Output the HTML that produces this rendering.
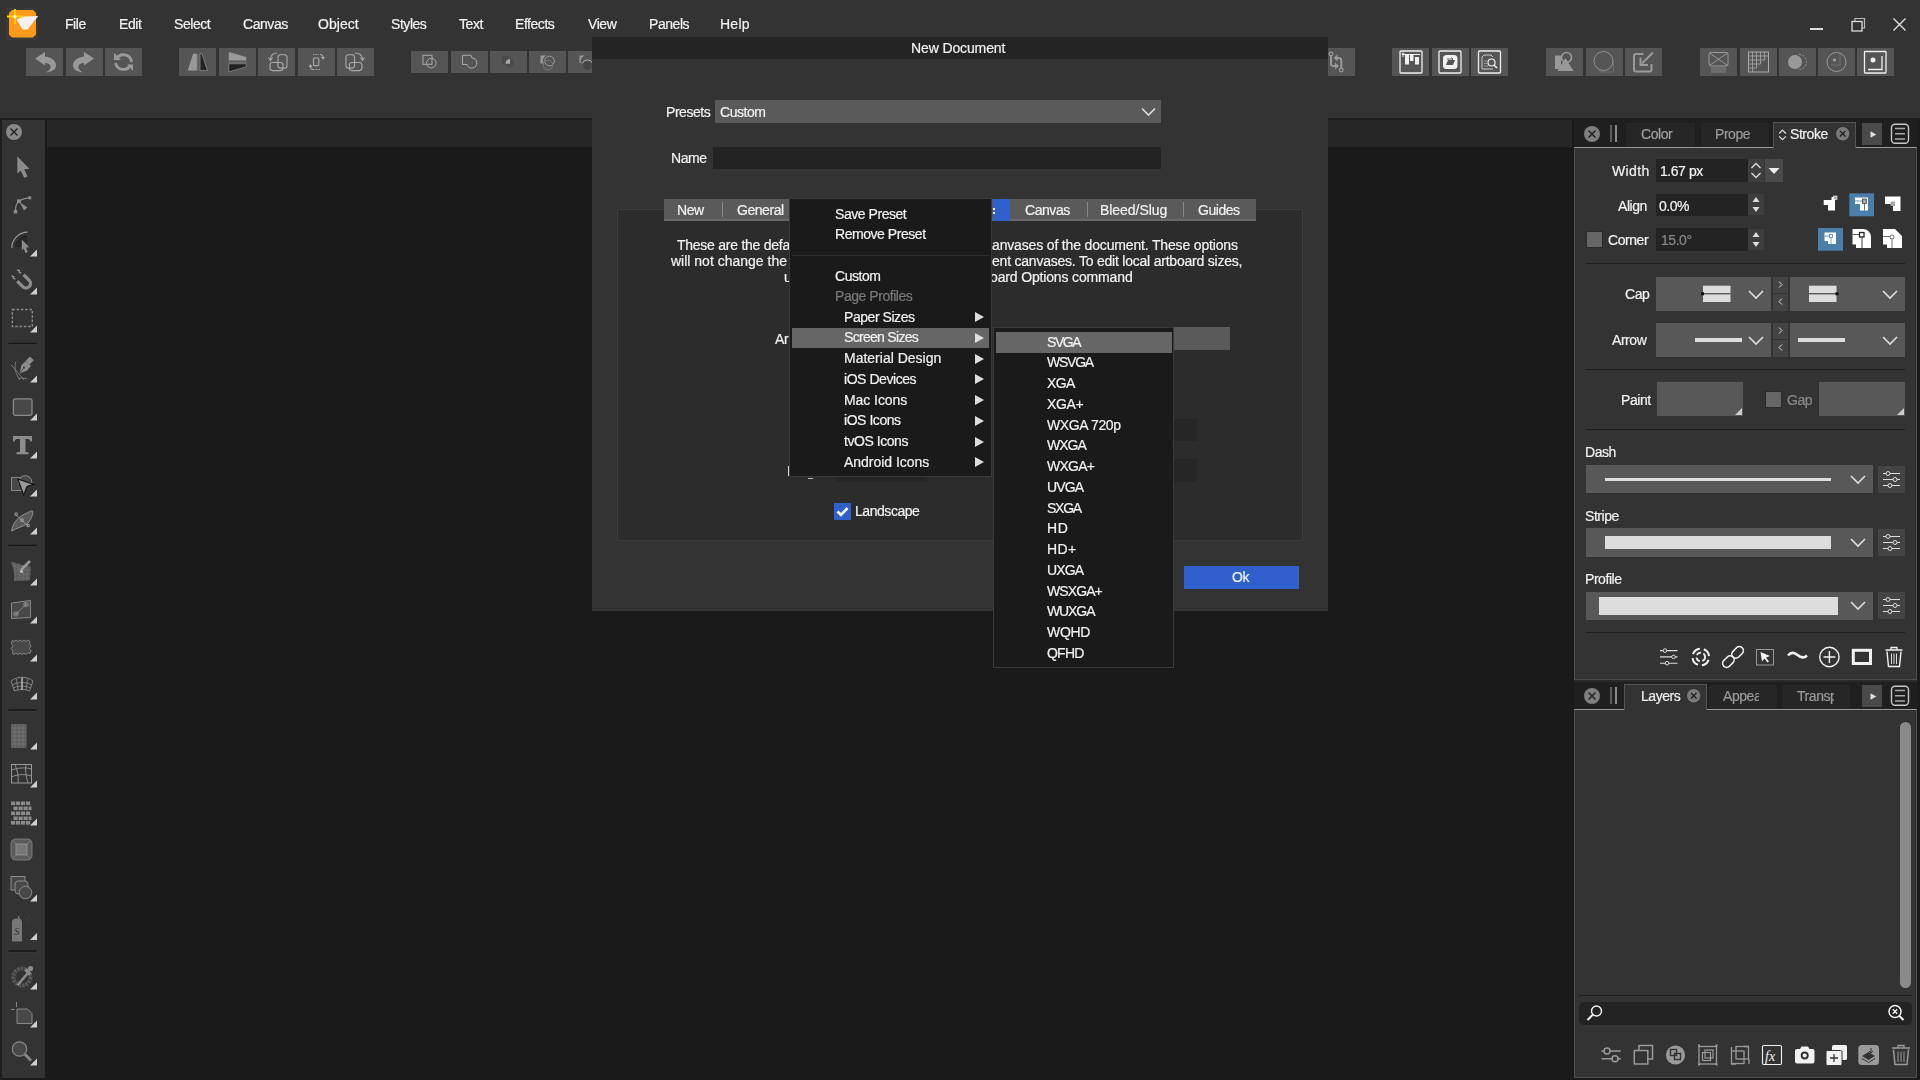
<!DOCTYPE html>
<html><head><meta charset="utf-8">
<style>
*{margin:0;padding:0;box-sizing:border-box}
html,body{width:1920px;height:1080px;overflow:hidden;background:#1a1a1a;font-family:"Liberation Sans",sans-serif;color:#f2f2f2}
.a{position:absolute}
.t{position:absolute;font-size:14px;line-height:13px;letter-spacing:-0.45px;white-space:nowrap;-webkit-text-stroke:0.2px currentColor;will-change:transform}
.btn{position:absolute;top:48px;width:37px;height:28px;background:#555}
.sbtn{position:absolute;top:51px;width:37px;height:22px;background:#555}
svg{position:absolute;overflow:visible}
</style></head><body>
<!-- top app bar -->
<div class="a" style="left:0;top:0;width:1920px;height:118px;background:#333"></div>
<div class="a" style="left:0;top:118px;width:1920px;height:2px;background:#1c1c1c"></div>
<!-- doc tab strip -->
<div class="a" style="left:47px;top:120px;width:1525px;height:27px;background:#262626"></div>
<!-- left toolbar -->
<div class="a" style="left:0;top:120px;width:2px;height:960px;background:#1e1e1e"></div>
<div class="a" style="left:2px;top:120px;width:43px;height:958px;background:#333"></div>


<!-- logo -->
<div class="a" style="left:6px;top:8px;width:32px;height:32px;background:#3a3a3a"></div>
<svg style="left:0;top:0" width="44" height="44" viewBox="0 0 44 44">
<path d="M12 10 H33 L36 13 V34.5 L33 37.5 H12 L9 34.5 V13 Z" fill="#fb9a1c"/>
<path d="M16.5 19.5 L24 16.5 L38.2 16 L27.5 29.5 L22.5 29.5 Z" fill="#f4f2f0"/>
<path d="M15 9 V24 M7 16.5 H23" stroke="#ffd400" stroke-width="1.8"/>
<circle cx="15" cy="16.5" r="1.5" fill="#fff"/>
</svg>
<!-- menu -->
<span class="t" style="left:65px;top:18px">File</span>
<span class="t" style="left:119px;top:18px">Edit</span>
<span class="t" style="left:174px;top:18px">Select</span>
<span class="t" style="left:243px;top:18px">Canvas</span>
<span class="t" style="left:318px;top:18px;letter-spacing:0.05px">Object</span>
<span class="t" style="left:391px;top:18px">Styles</span>
<span class="t" style="left:459px;top:18px">Text</span>
<span class="t" style="left:515px;top:18px">Effects</span>
<span class="t" style="left:588px;top:18px">View</span>
<span class="t" style="left:649px;top:18px">Panels</span>
<span class="t" style="left:720px;top:18px;letter-spacing:0.25px">Help</span>
<!-- window controls -->
<div class="a" style="left:1810px;top:28px;width:13px;height:2px;background:#ddd"></div>
<svg style="left:1850px;top:17px" width="16" height="16" viewBox="0 0 16 16"><path d="M5 4 V1.5 H14.5 V11 H12" fill="none" stroke="#bbb" stroke-width="1.2"/><rect x="2" y="4.5" width="10" height="9.5" fill="none" stroke="#ddd" stroke-width="1.3"/></svg>
<svg style="left:1892px;top:17px" width="15" height="15" viewBox="0 0 15 15"><path d="M1.5 1.5 L13.5 13.5 M13.5 1.5 L1.5 13.5" stroke="#e0e0e0" stroke-width="1.4"/></svg>

<!-- toolbar -->
<div class="a" style="left:26px;top:48px;width:37px;height:28px;background:#555"><svg width="37" height="28" viewBox="0 0 37 28"><path d="M9 10.5 L19 4 L19 8.5 C26 9.5 30 13 30 17.5 C30 21 27 23.5 20 24.5 C24 22 25 20 24.5 18 C24 16 22 15 19 15 L19 17.5 Z" fill="#999"/></svg></div>
<div class="a" style="left:66px;top:48px;width:37px;height:28px;background:#555"><svg width="37" height="28" viewBox="0 0 37 28"><path d="M28 10.5 L18 4 L18 8.5 C11 9.5 7 13 7 17.5 C7 21 10 23.5 17 24.5 C13 22 12 20 12.5 18 C13 16 15 15 18 15 L18 17.5 Z" fill="#999"/></svg></div>
<div class="a" style="left:105px;top:48px;width:37px;height:28px;background:#555"><svg width="37" height="28" viewBox="0 0 37 28"><path d="M11.5 11 A8 8 0 0 1 26.5 14" fill="none" stroke="#999" stroke-width="2.8"/><path d="M25.5 17 A8 8 0 0 1 10.5 15" fill="none" stroke="#999" stroke-width="2.8"/><path d="M9 4.8 L9 11.9 L15.9 11.9 Z M28 16.6 L28 23 L22 16.6 Z" fill="#999"/></svg></div>
<div class="a" style="left:179px;top:48px;width:37px;height:28px;background:#555"><svg width="37" height="28" viewBox="0 0 37 28"><path d="M14.1 5.75 L17.9 5.75 L17.9 22.6 L8.75 22.6 Z" fill="#999"/><path d="M18.8 5.5 V23" stroke="#777" stroke-width="1"/><path d="M21 5.75 L22.9 5.75 L28.5 22.6 L21 22.6 Z" fill="#222" stroke="#8a8a8a" stroke-width="0.8"/></svg></div>
<div class="a" style="left:219px;top:48px;width:37px;height:28px;background:#555"><svg width="37" height="28" viewBox="0 0 37 28"><path d="M9.75 3.9 L27.25 8.9 L27.25 12.6 L9.75 12.6 Z" fill="#999"/><path d="M9.5 14.3 H27.5" stroke="#777" stroke-width="1"/><path d="M9.75 15.75 L27.25 15.75 L27.25 18.9 L9.75 23.9 Z" fill="#222" stroke="#8a8a8a" stroke-width="0.8"/></svg></div>
<div class="a" style="left:258px;top:48px;width:37px;height:28px;background:#555"><svg width="37" height="28" viewBox="0 0 37 28"><rect x="20" y="6.75" width="9" height="13.4" rx="2.5" fill="none" stroke="#aaa" stroke-width="1.1"/><rect x="12" y="14.5" width="13" height="8.1" rx="2.5" fill="none" stroke="#aaa" stroke-width="1.1"/><path d="M19 5 C15 5 13 7 12.5 11" fill="none" stroke="#aaa" stroke-width="1.1"/><path d="M10.5 9.5 L12.5 12.5 L14.5 9.5" fill="none" stroke="#aaa" stroke-width="1.1"/></svg></div>
<div class="a" style="left:298px;top:48px;width:37px;height:28px;background:#555"><svg width="37" height="28" viewBox="0 0 37 28"><rect x="15.5" y="10" width="5.3" height="7.6" rx="0.8" fill="none" stroke="#aaa" stroke-width="1.1"/><path d="M15 6.5 H21 M15 21.5 H22" stroke="#aaa" stroke-width="1.1" stroke-dasharray="1.5 1.2"/><path d="M22 6.5 C24 6.5 25 8 25 10" fill="none" stroke="#aaa" stroke-width="1.1"/><path d="M23 9 L25 12 L27 9 Z" fill="#aaa"/><path d="M15 21.5 C13 21.5 12.5 20 12.5 18" fill="none" stroke="#aaa" stroke-width="1.1"/><path d="M10.5 19 L12.5 16 L14.5 19 Z" fill="#aaa"/></svg></div>
<div class="a" style="left:337px;top:48px;width:37px;height:28px;background:#555"><svg width="37" height="28" viewBox="0 0 37 28"><rect x="9" y="6.75" width="8.5" height="13.4" rx="2.5" fill="none" stroke="#aaa" stroke-width="1.1"/><rect x="12.4" y="14.5" width="12.5" height="8.1" rx="2.5" fill="none" stroke="#aaa" stroke-width="1.1"/><path d="M18 5 C22 5 25 7 25.5 11" fill="none" stroke="#aaa" stroke-width="1.1"/><path d="M23.5 9.5 L25.5 12.5 L27.5 9.5" fill="none" stroke="#aaa" stroke-width="1.1"/></svg></div>
<div class="a" style="left:411px;top:51px;width:37px;height:22px;background:#555"><svg width="37" height="22" viewBox="0 0 37 22"><rect x="12" y="4.3" width="9" height="9" fill="none" stroke="#aaa" stroke-width="1"/><circle cx="20.3" cy="12.1" r="4.8" fill="none" stroke="#aaa" stroke-width="1"/></svg></div>
<div class="a" style="left:451px;top:51px;width:37px;height:22px;background:#555"><svg width="37" height="22" viewBox="0 0 37 22"><path d="M11.5 4.3 H20 L21 7 A5 5 0 1 1 16 13.5 H11.5 Z" fill="none" stroke="#aaa" stroke-width="1"/></svg></div>
<div class="a" style="left:490px;top:51px;width:37px;height:22px;background:#555"><svg width="37" height="22" viewBox="0 0 37 22"><rect x="12" y="4.8" width="8" height="8" fill="#4a4a4a"/><circle cx="19.5" cy="12" r="4.5" fill="#4a4a4a"/><path d="M15.5 12.8 A4.5 4.5 0 0 1 20 8 V12.8 Z" fill="#aaa"/></svg></div>
<div class="a" style="left:529px;top:51px;width:37px;height:22px;background:#555"><svg width="37" height="22" viewBox="0 0 37 22"><path d="M11.5 4.5 H18 A5 5 0 0 0 15 12.5 L11.5 12.5 Z" fill="#999"/><circle cx="20.5" cy="10" r="4.8" fill="none" stroke="#999" stroke-width="1"/><circle cx="19" cy="14" r="4.8" fill="none" stroke="#777" stroke-width="1"/></svg></div>
<div class="a" style="left:568px;top:51px;width:37px;height:22px;background:#555"><svg width="37" height="22" viewBox="0 0 37 22"><path d="M11.5 4.5 H17 A6 6 0 0 0 13 12 L11.5 12 Z" fill="#999"/><path d="M14 12.5 A6 6 0 0 1 25 12.5" fill="none" stroke="#aaa" stroke-width="1"/><circle cx="19.5" cy="14.5" r="4.2" fill="#444"/></svg></div>
<div class="a" style="left:1318px;top:48px;width:37px;height:28px;background:#555"><svg width="37" height="28" viewBox="0 0 37 28"><circle cx="13" cy="6" r="1.8" fill="none" stroke="#999" stroke-width="1.3"/><path d="M13 8 V16 C13 18 14 18 16 18 H18" fill="none" stroke="#999" stroke-width="2"/><path d="M17 14.5 L21 18 L17 21.5 Z" fill="#999"/><circle cx="23.3" cy="22" r="1.8" fill="none" stroke="#999" stroke-width="1.3"/><path d="M23.3 20 V12 C23.3 10 22 10 20 10 H19" fill="none" stroke="#999" stroke-width="2"/><path d="M19.5 6.5 L15.5 10 L19.5 13.5 Z" fill="#999"/></svg></div>
<div class="a" style="left:1392px;top:48px;width:37px;height:28px;background:#555"><svg width="37" height="28" viewBox="0 0 37 28"><rect x="8" y="3" width="22" height="22" rx="1" fill="none" stroke="#f0f0f0" stroke-width="1.3"/><path d="M10 6.5 H28" stroke="#f0f0f0" stroke-width="1"/><rect x="13" y="6.5" width="4" height="10" fill="#f0f0f0"/><rect x="18" y="6.5" width="3.5" height="6.5" fill="#f0f0f0"/><rect x="23" y="9" width="4" height="7.5" fill="#f0f0f0"/><path d="M11 4.5 V9 M9.5 6 H12.5" stroke="#f0f0f0" stroke-width="0.9"/></svg></div>
<div class="a" style="left:1432px;top:48px;width:37px;height:28px;background:#555"><svg width="37" height="28" viewBox="0 0 37 28"><rect x="7" y="3" width="22" height="22" rx="1" fill="none" stroke="#f0f0f0" stroke-width="1.3"/><rect x="11" y="7" width="14.5" height="14" rx="3.5" fill="#f0f0f0"/><path d="M14 17 L16 12 H23 L21 17 Z" fill="#555"/><path d="M15 11 H21 M19.5 9.5 L21 11 L19.5 12.5" stroke="#555" stroke-width="0.9" fill="none"/></svg></div>
<div class="a" style="left:1471px;top:48px;width:37px;height:28px;background:#555"><svg width="37" height="28" viewBox="0 0 37 28"><rect x="7.5" y="3" width="22" height="22" rx="1" fill="none" stroke="#f0f0f0" stroke-width="1.3"/><path d="M13 7 H20 L22 9 M13 7 L11 9 V21 H22" fill="none" stroke="#ccc" stroke-width="1"/><circle cx="20.5" cy="14.5" r="3.5" fill="none" stroke="#f0f0f0" stroke-width="1.2"/><path d="M23 17 L26 20" stroke="#f0f0f0" stroke-width="1.6"/><path d="M13 13 H16 M13 15.5 H16 M13 18 H17" stroke="#aaa" stroke-width="0.8"/></svg></div>
<div class="a" style="left:1546px;top:48px;width:37px;height:28px;background:#555"><svg width="37" height="28" viewBox="0 0 37 28"><rect x="9" y="7.5" width="6" height="13.5" fill="#999"/><circle cx="20.5" cy="9.5" r="5" fill="none" stroke="#999" stroke-width="1.6"/><path d="M19.5 10 L27.5 23 H11.5 Z" fill="#999"/></svg></div>
<div class="a" style="left:1586px;top:48px;width:37px;height:28px;background:#555"><svg width="37" height="28" viewBox="0 0 37 28"><circle cx="17.5" cy="13" r="9.5" fill="none" stroke="#999" stroke-width="0.9"/><path d="M24 20 A9.5 9.5 0 0 1 13 22.5 L14 24 H27.5 V14 Z" fill="none" stroke="#888" stroke-width="0.8" stroke-dasharray="1 1"/></svg></div>
<div class="a" style="left:1625px;top:48px;width:37px;height:28px;background:#555"><svg width="37" height="28" viewBox="0 0 37 28"><path d="M18.5 6 H11 A2 2 0 0 0 9 8 V21.5 A2 2 0 0 0 11 23.5 H24.5 A2 2 0 0 0 26.5 21.5 V16" fill="none" stroke="#999" stroke-width="2"/><path d="M28 4.5 L17 15.5" stroke="#999" stroke-width="2"/><path d="M15.5 9.5 V17 H23" fill="none" stroke="#999" stroke-width="2"/></svg></div>
<div class="a" style="left:1700px;top:48px;width:37px;height:28px;background:#555"><svg width="37" height="28" viewBox="0 0 37 28"><rect x="9" y="4.5" width="19" height="13.5" rx="2" fill="none" stroke="#999" stroke-width="1"/><path d="M9.5 5 L27.5 17.5 M27.5 5 L9.5 17.5" stroke="#999" stroke-width="1"/><path d="M11 20 H26 M11 22 H26 M11 24 H26" stroke="#999" stroke-width="0.7"/></svg></div>
<div class="a" style="left:1740px;top:48px;width:37px;height:28px;background:#555"><svg width="37" height="28" viewBox="0 0 37 28"><rect x="8.5" y="4" width="20" height="20" fill="none" stroke="#aaa" stroke-width="1"/><path d="M8.5 8 H28.5 M8.5 12 H24.5 M8.5 16 H20.5 M8.5 20 H16.5 M12.5 4 V24 M16.5 4 V20 M20.5 4 V16 M24.5 4 V12" stroke="#aaa" stroke-width="0.8"/><path d="M28.5 8 L12.5 24" stroke="#888" stroke-width="0.6" stroke-dasharray="1 1.5"/></svg></div>
<div class="a" style="left:1779px;top:48px;width:37px;height:28px;background:#555"><svg width="37" height="28" viewBox="0 0 37 28"><circle cx="16" cy="14" r="7" fill="#999"/><path d="M20 6.5 A7.5 7.5 0 0 1 20 21.5" fill="none" stroke="#999" stroke-width="1" stroke-dasharray="2 1.5"/></svg></div>
<div class="a" style="left:1818px;top:48px;width:37px;height:28px;background:#555"><svg width="37" height="28" viewBox="0 0 37 28"><circle cx="18.5" cy="14" r="9.5" fill="none" stroke="#999" stroke-width="1"/><circle cx="16.5" cy="12" r="1.7" fill="#999"/><path d="M22 6.5 V17 H13" fill="none" stroke="#999" stroke-width="0.8" stroke-dasharray="1 1"/></svg></div>
<div class="a" style="left:1857px;top:48px;width:37px;height:28px;background:#555"><svg width="37" height="28" viewBox="0 0 37 28"><rect x="7.5" y="3.5" width="21.5" height="21.5" rx="0.8" fill="none" stroke="#f0f0f0" stroke-width="1.3"/><circle cx="16" cy="12" r="2.5" fill="#f0f0f0"/><path d="M25 8 V21.5 H11" fill="none" stroke="#f0f0f0" stroke-width="1.3"/></svg></div>

<!-- left toolbar icons -->
<svg style="left:0;top:0" width="46" height="1080" viewBox="0 0 46 1080"><circle cx="14" cy="132" r="8" fill="#888"/><path d="M10.5 128.5 L17.5 135.5 M17.5 128.5 L10.5 135.5" stroke="#1e1e1e" stroke-width="1.3"/><rect x="8.5" y="342.75" width="28" height="1.6" fill="#151515"/><rect x="8.5" y="344.35" width="28" height="0.8" fill="#3c3c3c"/><rect x="8.5" y="544.75" width="28" height="1.6" fill="#151515"/><rect x="8.5" y="546.35" width="28" height="0.8" fill="#3c3c3c"/><rect x="8.5" y="709.25" width="28" height="1.6" fill="#151515"/><rect x="8.5" y="710.85" width="28" height="0.8" fill="#3c3c3c"/><rect x="8.5" y="950.25" width="28" height="1.6" fill="#151515"/><rect x="8.5" y="951.85" width="28" height="0.8" fill="#3c3c3c"/><path d="M30 256.5 L37 249.5 L37 256.5 Z" fill="#cfcfcf"/><path d="M30 294.5 L37 287.5 L37 294.5 Z" fill="#cfcfcf"/><path d="M30 332.5 L37 325.5 L37 332.5 Z" fill="#cfcfcf"/><path d="M30 382.5 L37 375.5 L37 382.5 Z" fill="#cfcfcf"/><path d="M30 420.5 L37 413.5 L37 420.5 Z" fill="#cfcfcf"/><path d="M30 458.5 L37 451.5 L37 458.5 Z" fill="#cfcfcf"/><path d="M30 496.5 L37 489.5 L37 496.5 Z" fill="#cfcfcf"/><path d="M30 534.5 L37 527.5 L37 534.5 Z" fill="#cfcfcf"/><path d="M30 585.5 L37 578.5 L37 585.5 Z" fill="#cfcfcf"/><path d="M30 623.5 L37 616.5 L37 623.5 Z" fill="#cfcfcf"/><path d="M30 661.5 L37 654.5 L37 661.5 Z" fill="#cfcfcf"/><path d="M30 699.5 L37 692.5 L37 699.5 Z" fill="#cfcfcf"/><path d="M30 749.5 L37 742.5 L37 749.5 Z" fill="#cfcfcf"/><path d="M30 787.5 L37 780.5 L37 787.5 Z" fill="#cfcfcf"/><path d="M30 825.5 L37 818.5 L37 825.5 Z" fill="#cfcfcf"/><path d="M30 901.5 L37 894.5 L37 901.5 Z" fill="#cfcfcf"/><path d="M30 940 L37 933 L37 940 Z" fill="#cfcfcf"/><path d="M30 989.5 L37 982.5 L37 989.5 Z" fill="#cfcfcf"/><path d="M30 1027.5 L37 1020.5 L37 1027.5 Z" fill="#cfcfcf"/><path d="M30 1065.5 L37 1058.5 L37 1065.5 Z" fill="#cfcfcf"/><path d="M17.3 156.3 L29.5 169 L24.2 169.3 L27.5 176.5 L24.2 178 L20.8 170.8 L17.3 173.6 Z" fill="#8c8c8c"/><path d="M15.4 211 C15.5 206 17 202 20 200.5 C23 198.5 26 197.8 29.5 197.8" fill="none" stroke="#8c8c8c" stroke-width="1.2"/><rect x="13.7" y="210" width="3.5" height="3.5" fill="#8c8c8c"/><rect x="28.3" y="196.3" width="3" height="3" fill="#8c8c8c"/><rect x="17" y="199.4" width="3.8" height="3.6" fill="#8c8c8c"/><path d="M19.5 202 L27.5 207.5 L24 210.5 Z" fill="#8c8c8c"/><path d="M11.8 248 A16 16 0 0 1 27.5 232.2" fill="none" stroke="#999" stroke-width="1.2"/><path d="M15 247 A13 13 0 0 1 27 235 V247 Z" fill="#262626"/><path d="M21.8 239.6 L29.3 247.3 L26 247.6 L27.8 252 L25.5 253 L23.7 248.6 L21.8 250.5 Z" fill="#8c8c8c"/><path d="M17.2 281.1 L22.8 286.7 A4.5 4.5 0 0 0 29.2 280.3 L23.6 274.7" fill="none" stroke="#8c8c8c" stroke-width="3.3"/><path d="M11.5 275.8 L13.8 276.6 L13.2 278 L15.5 279.3 M17.2 269.8 L19.5 270.6 L18.9 272 L21.2 273.3" fill="none" stroke="#999" stroke-width="1.3"/><rect x="12.3" y="309.5" width="20" height="17" fill="none" stroke="#8c8c8c" stroke-width="1.4" stroke-dasharray="2.5 1.8"/><path d="M11 365 C15 369 20 375 24 380 M16 361.5 C14 367 15 373 20 380 M18 378 L27 378.5" fill="none" stroke="#888" stroke-width="0.8"/><path d="M19.5 373.5 L21.5 365 L26 361 L31 366 L27 370.5 Z" fill="#8c8c8c"/><rect x="27" y="357.5" width="5.5" height="6" transform="rotate(45 29.75 360.5)" fill="#8c8c8c"/><circle cx="24" cy="367.5" r="0.9" fill="#333"/><path d="M19.8 373 L24 367.5" stroke="#333" stroke-width="0.6"/><rect x="13.4" y="398.8" width="18.6" height="16.6" rx="1.8" fill="#484848" stroke="#8a8a8a" stroke-width="1.3"/><path d="M13 436 H32 V441.5 L30.5 441.5 C30 439.5 29 439 27 439 H25.5 V451.5 C25.5 452 26.5 452.2 28.5 452.2 V454.2 H16.5 V452.2 C18.5 452.2 20 452 20 451.5 V439 H18 C16 439 15 439.5 14.5 441.5 L13 441.5 Z" fill="#8c8c8c"/><rect x="11.5" y="477.5" width="10.5" height="13" fill="#484848" stroke="#888" stroke-width="1"/><path d="M19 482 A6.4 6.4 0 0 1 31.8 482 V484 H19 Z" fill="#484848" stroke="#888" stroke-width="1"/><path d="M17.8 478.9 L33.8 484.4 L27 486.5 L23.7 494.9 Z" fill="#999" stroke="#111" stroke-width="1.1"/><path d="M11.5 531 C13 522 19 516 27 513 C30 511.5 31.5 510.5 32.5 511 C33.5 513 32 518 28 523 C23 527 16 528 11.5 531 Z" fill="#5a5a5a" stroke="#999" stroke-width="0.9"/><path d="M16 515 L28 526" stroke="#999" stroke-width="0.8"/><rect x="15" y="513" width="2.2" height="2.2" fill="none" stroke="#aaa" stroke-width="0.8"/><rect x="21" y="519" width="2.2" height="2.2" fill="none" stroke="#aaa" stroke-width="0.8"/><rect x="27" y="524.5" width="2.2" height="2.2" fill="none" stroke="#aaa" stroke-width="0.8"/><path d="M11 562 C16 563 20 564 25 566 L31 567 L30 580 C25 581 20 580.5 14 581 C15 575 13 568 11 562 Z" fill="#5a5a5a"/><path d="M11 562 L30 580 M13 566 H30 M14 570 H30 M14.5 574 H30 M14.5 578 H30 M15 562 V581 M19 563 V581 M23 565 V581 M27 566 V581" stroke="#777" stroke-width="0.6"/><path d="M21 570 L30 561" stroke="#999" stroke-width="2.6"/><circle cx="21.5" cy="571.5" r="1.6" fill="#bbb"/><path d="M11.5 603 L30.5 600.5 V617.5 L11.5 618.5 Z" fill="#484848" stroke="#8a8a8a" stroke-width="1"/><circle cx="16" cy="614" r="2.8" fill="#777"/><circle cx="26" cy="604.5" r="2.8" fill="#777"/><path d="M16 614 L26 604.5" stroke="#999" stroke-width="0.7"/><path d="M12 640.5 L14 641.5 L16 640 L18 641.5 L20 640 L22 641.5 L24 640 L26 641.5 L28 640 L30 641.5 L29.5 644 L31 646 L29.5 648.5 L31 651 L30 653.5 L28 652.5 L26 654.5 L24 653 L22 654.5 L20 653 L18 654.5 L16 653 L14 654.5 L12.5 653.5 L13 651 L11 648.5 L13 646 L11.5 644 Z" fill="#484848" stroke="#8a8a8a" stroke-width="0.9"/><path d="M11 681 C17 676 27 676 33 681 L29.5 691 C25 689 19 689 14.5 691 Z" fill="none" stroke="#999" stroke-width="0.8"/><path d="M12.5 685 C18 681.5 26 681.5 31.5 685 M13.5 688 C18 685.5 26 685.5 30.5 688 M22 677.5 V689.5 M16.5 679 L18 690 M27.5 679 L26 690" fill="none" stroke="#999" stroke-width="0.7"/><path d="M22 677.5 V690" stroke="#bbb" stroke-width="1.3"/><rect x="11" y="724" width="15.5" height="24" fill="#5e5e5e"/><path d="M11 728 H26.5 M11 732 H26.5 M11 736 H26.5 M11 740 H26.5 M11 744 H26.5 M15 724 V748 M19 724 V748 M23 724 V748" stroke="#7a7a7a" stroke-width="0.7"/><rect x="11.5" y="764.5" width="20" height="18.5" fill="none" stroke="#999" stroke-width="1"/><path d="M11.5 770 C18 768 24 767 31.5 769 M11.5 777 C18 774 24 774 31.5 776 M15 764.5 C17 770 19 777 18 783 M26 764.5 C25 770 26 777 28 783" fill="none" stroke="#999" stroke-width="0.9"/><rect x="11" y="801.5" width="4.199999999999999" height="3.6" fill="#8a8a8a"/><rect x="16" y="801.5" width="4.199999999999999" height="3.6" fill="#8a8a8a"/><rect x="21" y="801.5" width="4.199999999999999" height="3.6" fill="#8a8a8a"/><rect x="26" y="801.5" width="4.199999999999999" height="3.6" fill="#8a8a8a"/><rect x="13.5" y="806.5" width="4.199999999999999" height="3.6" fill="#8a8a8a"/><rect x="18.5" y="806.5" width="4.199999999999999" height="3.6" fill="#8a8a8a"/><rect x="23.5" y="806.5" width="4.199999999999999" height="3.6" fill="#8a8a8a"/><rect x="28.5" y="806.5" width="3.0" height="3.6" fill="#8a8a8a"/><rect x="11" y="811.5" width="4.199999999999999" height="3.6" fill="#8a8a8a"/><rect x="16" y="811.5" width="4.199999999999999" height="3.6" fill="#8a8a8a"/><rect x="21" y="811.5" width="4.199999999999999" height="3.6" fill="#8a8a8a"/><rect x="26" y="811.5" width="4.199999999999999" height="3.6" fill="#8a8a8a"/><rect x="13.5" y="816.5" width="4.199999999999999" height="3.6" fill="#8a8a8a"/><rect x="18.5" y="816.5" width="4.199999999999999" height="3.6" fill="#8a8a8a"/><rect x="23.5" y="816.5" width="4.199999999999999" height="3.6" fill="#8a8a8a"/><rect x="28.5" y="816.5" width="3.0" height="3.6" fill="#8a8a8a"/><rect x="11" y="821" width="4.199999999999999" height="3.6" fill="#8a8a8a"/><rect x="16" y="821" width="4.199999999999999" height="3.6" fill="#8a8a8a"/><rect x="21" y="821" width="4.199999999999999" height="3.6" fill="#8a8a8a"/><rect x="26" y="821" width="4.199999999999999" height="3.6" fill="#8a8a8a"/><rect x="11" y="839" width="21" height="21" rx="4.5" fill="#5a5a5a" stroke="#888" stroke-width="0.8"/><rect x="16" y="844" width="11" height="11" fill="#777" stroke="#999" stroke-width="0.8"/><path d="M12 840 L16 844 M31 840 L27 844 M12 859 L16 855 M31 859 L27 855" stroke="#888" stroke-width="0.8"/><rect x="11" y="876.5" width="14" height="13.5" fill="#484848" stroke="#8a8a8a" stroke-width="1"/><rect x="15" y="881" width="13" height="13" rx="3.5" fill="#484848" stroke="#8a8a8a" stroke-width="1"/><circle cx="25.5" cy="892.5" r="6.3" fill="#484848" stroke="#8a8a8a" stroke-width="1"/><path d="M12 922 C12 920 14 918.5 16 918.5 L18 918.5 V916 H19.5 V918.5 C21 919 22 920.5 22 922 V941.5 H12 Z" fill="#777"/><text x="14.2" y="935" font-family="Liberation Serif" font-style="italic" font-size="10" fill="#333">S</text><path d="M26 919 h.8 M28 917 h.8 M27 922 h.8 M30 920 h.8" stroke="#666" stroke-width="0.8"/><circle cx="21.9" cy="977" r="8.5" fill="none" stroke="#575757" stroke-width="4" stroke-dasharray="2.6 0.9"/><path d="M19 983.5 L27.5 973.5" stroke="#8a8a8a" stroke-width="2.6"/><path d="M25.5 969.5 L30.5 974.5" stroke="#8a8a8a" stroke-width="3.2"/><circle cx="30.5" cy="968.5" r="2.6" fill="#8a8a8a"/><path d="M17.5 985 L19 983.5" stroke="#aaa" stroke-width="1.4"/><path d="M17 1009 H27.5 L32 1013.5 V1023.5 H17 Z" fill="#484848" stroke="#888" stroke-width="1"/><path d="M16.5 1002 V1007 M11 1009.5 H14.5" stroke="#888" stroke-width="1"/><circle cx="19.5" cy="1049" r="7.2" fill="#484848" stroke="#8a8a8a" stroke-width="1.2"/><path d="M24.8 1054.3 L31 1060.5" stroke="#8a8a8a" stroke-width="2.8"/></svg>
<!-- dialog -->
<div class="a" style="left:592px;top:37px;width:736px;height:574px;background:#333"></div>
<div class="a" style="left:592px;top:37px;width:736px;height:22px;background:#242424"></div>
<span class="t" style="left:911px;top:42px;font-size:14px;letter-spacing:-0.12px">New Document</span>
<span class="t" style="left:666px;top:106px">Presets</span>
<div class="a" style="left:715px;top:100px;width:446px;height:23px;background:#5a5a5a"></div>
<span class="t" style="left:720px;top:106px">Custom</span>
<svg style="left:1141px;top:107px" width="15" height="10" viewBox="0 0 15 10"><path d="M1 1.5 L7.5 8 L14 1.5" fill="none" stroke="#ddd" stroke-width="1.6"/></svg>
<span class="t" style="left:671px;top:152px">Name</span>
<div class="a" style="left:713px;top:147px;width:448px;height:22px;background:#232323"></div>
<!-- group box -->
<div class="a" style="left:617px;top:209px;width:686px;height:332px;background:#2c2c2c;border:1px solid #3c3c3c"></div>
<!-- tab bar -->
<div class="a" style="left:664px;top:199px;width:592px;height:22px;background:#5a5a5a;border-bottom:2px solid #6a6a6a"></div>
<span class="t" style="left:677px;top:204px">New</span>
<div class="a" style="left:722px;top:202px;width:1px;height:15px;background:#8a8a8a"></div>
<span class="t" style="left:737px;top:204px">General</span>
<div class="a" style="left:993px;top:199px;width:17px;height:22px;background:#2f60cc"></div>
<span class="t" style="left:1025px;top:204px">Canvas</span>
<div class="a" style="left:1087px;top:202px;width:1px;height:15px;background:#8a8a8a"></div>
<span class="t" style="left:1100px;top:204px;letter-spacing:-0.05px">Bleed/Slug</span>
<div class="a" style="left:1183px;top:202px;width:1px;height:15px;background:#8a8a8a"></div>
<span class="t" style="left:1198px;top:204px">Guides</span>
<!-- description -->
<span class="t" style="left:677px;top:239px;letter-spacing:-0.25px">These are the defa</span>
<span class="t" style="left:671px;top:255px;letter-spacing:0.00px">will not change the</span>
<span class="t" style="left:784px;top:271px">u</span>
<span class="t" style="left:992px;top:239px;letter-spacing:-0.16px">anvases of the document. These options</span>
<span class="t" style="left:992px;top:255px;letter-spacing:-0.22px">ent canvases. To edit local artboard sizes,</span>
<span class="t" style="left:990px;top:271px;letter-spacing:-0.15px">oard Options command</span>
<!-- fields behind menus -->
<span class="t" style="left:775px;top:333px">Ar</span>
<div class="a" style="left:1174px;top:327px;width:56px;height:23px;background:#5a5a5a"></div>
<div class="a" style="left:1100px;top:419px;width:97px;height:22px;background:#262626"></div>
<div class="a" style="left:1100px;top:459px;width:97px;height:23px;background:#262626"></div>
<div class="a" style="left:835px;top:459px;width:92px;height:23px;background:#262626"></div>
<div class="a" style="left:834px;top:503px;width:17px;height:17px;background:#2f60cc"></div>
<svg style="left:834px;top:503px" width="17" height="17" viewBox="0 0 17 17"><path d="M3.5 8.5 L7 12 L13.5 5" fill="none" stroke="#fff" stroke-width="2.6"/></svg>
<span class="t" style="left:855px;top:505px">Landscape</span>
<div class="a" style="left:1184px;top:566px;width:115px;height:23px;background:#2f60cc"></div>
<span class="t" style="left:1232px;top:571px">Ok</span>

<div class="a" style="left:788px;top:466px;width:1px;height:10px;background:#ddd"></div>
<div class="a" style="left:808px;top:478px;width:5px;height:1px;background:#bbb"></div>
<div class="a" style="left:993px;top:207.5px;width:1.5px;height:2px;background:#eee"></div>
<div class="a" style="left:993px;top:212px;width:1.5px;height:2px;background:#eee"></div>
<!-- context menu -->
<div class="a" style="left:789px;top:198px;width:203px;height:279px;background:#1a1a1a;border:1px solid #3a3a3a"></div>
<span class="t" style="left:835px;top:208px">Save Preset</span>
<span class="t" style="left:835px;top:228px">Remove Preset</span>
<div class="a" style="left:792px;top:255px;width:197px;height:1px;background:#2e2e2e"></div>
<span class="t" style="left:835px;top:270px">Custom</span>
<span class="t" style="left:835px;top:290px;color:#7a7a7a">Page Profiles</span>
<div class="a" style="left:792px;top:328px;width:197px;height:20px;background:#666"></div>
<span class="t" style="left:844px;top:310.7px">Paper Sizes</span>
<svg style="left:975px;top:312px" width="9" height="10" viewBox="0 0 9 10"><path d="M0 0 L9 5 L0 10 Z" fill="#ddd"/></svg>
<span class="t" style="left:844px;top:331.4px;letter-spacing:-0.70px">Screen Sizes</span>
<svg style="left:975px;top:333px" width="9" height="10" viewBox="0 0 9 10"><path d="M0 0 L9 5 L0 10 Z" fill="#ddd"/></svg>
<span class="t" style="left:844px;top:352.1px;letter-spacing:0.00px">Material Design</span>
<svg style="left:975px;top:354px" width="9" height="10" viewBox="0 0 9 10"><path d="M0 0 L9 5 L0 10 Z" fill="#ddd"/></svg>
<span class="t" style="left:844px;top:372.9px">iOS Devices</span>
<svg style="left:975px;top:374px" width="9" height="10" viewBox="0 0 9 10"><path d="M0 0 L9 5 L0 10 Z" fill="#ddd"/></svg>
<span class="t" style="left:844px;top:393.6px;letter-spacing:-0.06px">Mac Icons</span>
<svg style="left:975px;top:395px" width="9" height="10" viewBox="0 0 9 10"><path d="M0 0 L9 5 L0 10 Z" fill="#ddd"/></svg>
<span class="t" style="left:844px;top:414.3px">iOS Icons</span>
<svg style="left:975px;top:416px" width="9" height="10" viewBox="0 0 9 10"><path d="M0 0 L9 5 L0 10 Z" fill="#ddd"/></svg>
<span class="t" style="left:844px;top:435.0px">tvOS Icons</span>
<svg style="left:975px;top:437px" width="9" height="10" viewBox="0 0 9 10"><path d="M0 0 L9 5 L0 10 Z" fill="#ddd"/></svg>
<span class="t" style="left:844px;top:455.7px;letter-spacing:-0.03px">Android Icons</span>
<svg style="left:975px;top:457px" width="9" height="10" viewBox="0 0 9 10"><path d="M0 0 L9 5 L0 10 Z" fill="#ddd"/></svg>
<!-- submenu -->
<div class="a" style="left:993px;top:327px;width:181px;height:341px;background:#1a1a1a;border:1px solid #3a3a3a"></div>
<div class="a" style="left:995.5px;top:332.4px;width:176px;height:20.3px;background:#666"></div>
<span class="t" style="left:1047px;top:335.7px;letter-spacing:-1.42px">SVGA</span>
<span class="t" style="left:1047px;top:356.4px;letter-spacing:-1.23px">WSVGA</span>
<span class="t" style="left:1047px;top:377.2px;letter-spacing:-0.65px">XGA</span>
<span class="t" style="left:1047px;top:397.9px;letter-spacing:-0.35px">XGA+</span>
<span class="t" style="left:1047px;top:418.6px;letter-spacing:-0.38px">WXGA 720p</span>
<span class="t" style="left:1047px;top:439.4px;letter-spacing:-1.02px">WXGA</span>
<span class="t" style="left:1047px;top:460.1px;letter-spacing:-0.73px">WXGA+</span>
<span class="t" style="left:1047px;top:480.8px;letter-spacing:-0.88px">UVGA</span>
<span class="t" style="left:1047px;top:501.5px;letter-spacing:-1.25px">SXGA</span>
<span class="t" style="left:1047px;top:522.3px;letter-spacing:0.55px">HD</span>
<span class="t" style="left:1047px;top:543.0px;letter-spacing:0.45px">HD+</span>
<span class="t" style="left:1047px;top:563.7px;letter-spacing:-0.88px">UXGA</span>
<span class="t" style="left:1047px;top:584.5px;letter-spacing:-0.91px">WSXGA+</span>
<span class="t" style="left:1047px;top:605.2px;letter-spacing:-1.10px">WUXGA</span>
<span class="t" style="left:1047px;top:625.9px;letter-spacing:-0.32px">WQHD</span>
<span class="t" style="left:1047px;top:646.6px;letter-spacing:-0.78px">QFHD</span>

<!-- right panels -->
<div class="a" style="left:1574px;top:120px;width:343px;height:27px;background:#1f1f1f"></div>
<svg style="left:1584px;top:126px" width="16" height="16" viewBox="0 0 16 16"><circle cx="8" cy="8" r="8" fill="#7e7e7e"/><path d="M4.5 4.5 L11.5 11.5 M11.5 4.5 L4.5 11.5" stroke="#1a1a1a" stroke-width="1.3"/></svg>
<div class="a" style="left:1610px;top:125px;width:1.5px;height:17px;background:#5e5e5e"></div><div class="a" style="left:1615px;top:125px;width:1.5px;height:17px;background:#8a8a8a"></div>
<div class="a" style="left:1626px;top:123px;width:69px;height:24px;background:#262626"></div>
<span class="t" style="left:1641px;top:128px;color:#a0a0a0">Color</span>
<div class="a" style="left:1701px;top:123px;width:68px;height:24px;background:#262626"></div><span class="t" style="left:1715px;top:128px;color:#9a9a9a">Prope</span>
<div class="a" style="left:1574px;top:147px;width:343px;height:533px;background:#333;border:1px solid #4d4d4d;border-top:1px solid #9a9a9a"></div>
<div class="a" style="left:1773px;top:122px;width:83px;height:26px;background:#333;border:1px solid #555;border-bottom:none"></div>
<svg style="left:1778px;top:129px" width="9" height="12" viewBox="0 0 9 12"><path d="M1.2 4.5 L4.5 1.2 L7.8 4.5 M1.2 7.3 L4.5 10.6 L7.8 7.3" fill="none" stroke="#ddd" stroke-width="1.2"/></svg>
<span class="t" style="left:1790px;top:128px;color:#f0f0f0">Stroke</span>
<svg style="left:1835.8px;top:127.3px" width="13.4" height="13.4" viewBox="0 0 13.4 13.4"><circle cx="6.7" cy="6.7" r="6.7" fill="#7a7a7a"/><path d="M3.9000000000000004 3.9000000000000004 L9.5 9.5 M9.5 3.9000000000000004 L3.9000000000000004 9.5" stroke="#1a1a1a" stroke-width="1.3"/></svg>
<div class="a" style="left:1862px;top:123px;width:20px;height:22px;background:#4a4a4a"></div><svg style="left:1869.5px;top:130.5px" width="7" height="7" viewBox="0 0 7 7"><path d="M0.5 0.3 L6.3 3.5 L0.5 6.7 Z" fill="#e0e0e0"/></svg>
<svg style="left:1890px;top:123px" width="20" height="21" viewBox="0 0 20 21"><rect x="1.5" y="1.2" width="17" height="19" rx="3.5" fill="none" stroke="#c8c8c8" stroke-width="1.4"/><path d="M5 5.5 H15 M5 10.7 H15 M5 16 H15" stroke="#aaa" stroke-width="1.6"/></svg>
<div class="a" style="left:1574px;top:680px;width:343px;height:2px;background:#2a2a2a"></div>
<div class="a" style="left:1574px;top:682px;width:343px;height:27px;background:#1f1f1f"></div>
<svg style="left:1584px;top:688px" width="16" height="16" viewBox="0 0 16 16"><circle cx="8" cy="8" r="8" fill="#7e7e7e"/><path d="M4.5 4.5 L11.5 11.5 M11.5 4.5 L4.5 11.5" stroke="#1a1a1a" stroke-width="1.3"/></svg>
<div class="a" style="left:1610px;top:687px;width:1.5px;height:17px;background:#5e5e5e"></div><div class="a" style="left:1615px;top:687px;width:1.5px;height:17px;background:#8a8a8a"></div>
<div class="a" style="left:1709px;top:685px;width:68px;height:24px;background:#262626"></div><div class="a" style="left:1722px;top:685px;width:36.5px;height:24px;overflow:hidden"><span class="t" style="left:1px;top:5px;color:#9a9a9a">Appearance</span></div>
<div class="a" style="left:1782px;top:685px;width:68px;height:24px;background:#262626"></div><div class="a" style="left:1797px;top:685px;width:36.5px;height:24px;overflow:hidden"><span class="t" style="left:0px;top:5px;color:#9a9a9a">Transparency</span></div>
<div class="a" style="left:1574px;top:709px;width:343px;height:369px;background:#333;border:1px solid #4d4d4d;border-top:1px solid #9a9a9a"></div>
<div class="a" style="left:1624px;top:684px;width:83px;height:26px;background:#333;border:1px solid #555;border-bottom:none"></div>
<span class="t" style="left:1641px;top:690px;color:#f0f0f0">Layers</span>
<svg style="left:1687.3px;top:689.3px" width="13.4" height="13.4" viewBox="0 0 13.4 13.4"><circle cx="6.7" cy="6.7" r="6.7" fill="#7a7a7a"/><path d="M3.9000000000000004 3.9000000000000004 L9.5 9.5 M9.5 3.9000000000000004 L3.9000000000000004 9.5" stroke="#1a1a1a" stroke-width="1.3"/></svg>
<div class="a" style="left:1862px;top:685px;width:20px;height:22px;background:#4a4a4a"></div><svg style="left:1869.5px;top:692.5px" width="7" height="7" viewBox="0 0 7 7"><path d="M0.5 0.3 L6.3 3.5 L0.5 6.7 Z" fill="#e0e0e0"/></svg>
<svg style="left:1890px;top:685px" width="20" height="21" viewBox="0 0 20 21"><rect x="1.5" y="1.2" width="17" height="19" rx="3.5" fill="none" stroke="#c8c8c8" stroke-width="1.4"/><path d="M5 5.5 H15 M5 10.7 H15 M5 16 H15" stroke="#aaa" stroke-width="1.6"/></svg>

<!-- stroke panel body -->
<span class="t" style="left:1612px;top:165px;letter-spacing:0.4px">Width</span>
<div class="a" style="left:1656px;top:159px;width:92px;height:23px;background:#232323"></div>
<span class="t" style="left:1660px;top:165px">1.67 px</span>
<div class="a" style="left:1748px;top:159px;width:16px;height:23px;background:#3e3e3e"><svg width="16" height="23" viewBox="0 0 16 23"><path d="M3.5 9 L8 4.5 L12.5 9 M3.5 14 L8 18.5 L12.5 14" fill="none" stroke="#ddd" stroke-width="1.3"/></svg></div>
<div class="a" style="left:1765px;top:159px;width:18px;height:23px;background:#4a4a4a"><svg width="18" height="23" viewBox="0 0 18 23"><path d="M3.5 9 L14.5 9 L9 15 Z" fill="#eee"/></svg></div>
<span class="t" style="left:1618px;top:200px">Align</span>
<div class="a" style="left:1656px;top:194px;width:92px;height:22px;background:#232323"></div>
<span class="t" style="left:1659px;top:200px">0.0%</span>
<div class="a" style="left:1747.5px;top:194px;width:16px;height:21px;background:#3e3e3e"><svg width="16" height="21" viewBox="0 0 16 21"><path d="M4.5 8 L8 3 L11.5 8 Z M4.5 13 L8 18 L11.5 13 Z" fill="#ddd"/></svg></div>
<div class="a" style="left:1586px;top:231px;width:17px;height:17px;background:#666;border:1px solid #2a2a2a"></div>
<span class="t" style="left:1608px;top:234px">Corner</span>
<div class="a" style="left:1656px;top:228px;width:92px;height:23px;background:#232323"></div>
<span class="t" style="left:1661px;top:234px;color:#888">15.0°</span>
<div class="a" style="left:1747.5px;top:229px;width:16px;height:21px;background:#3e3e3e"><svg width="16" height="21" viewBox="0 0 16 21"><path d="M4.5 8 L8 3 L11.5 8 Z M4.5 13 L8 18 L11.5 13 Z" fill="#ddd"/></svg></div>
<svg style="left:1818px;top:193px" width="90" height="60" viewBox="1818 193 90 60"><path d="M1823.7 200 H1831.5 V197 H1835 V210.4 H1828 V205 H1823.7 Z" fill="#fff"/><rect x="1833.5" y="196" width="3.5" height="3.5" fill="#aaa" stroke="#fff" stroke-width="0.6"/><rect x="1849.3" y="193.3" width="24.7" height="23" fill="#4a7eab"/><path d="M1855 197.5 H1868 V210.5 H1860 V204 H1855 Z" fill="#fff"/><path d="M1855 201 H1864" stroke="#4a7eab" stroke-width="0.8"/><rect x="1862.5" y="199" width="4" height="4.5" fill="#aaa" stroke="#333" stroke-width="0.7"/><path d="M1864.5 203.5 V210.5" stroke="#333" stroke-width="0.7"/><path d="M1885 196.5 H1900.5 V211 H1893 V204 H1885 Z" fill="#fff"/><rect x="1890.5" y="201.5" width="4.5" height="4.5" fill="#aaa"/><rect x="1818" y="228" width="25" height="22.7" fill="#4a7eab"/><path d="M1824.5 232.5 H1836 V244 H1828 V241 H1824.5 Z" fill="#fff"/><path d="M1824.5 236 H1830" stroke="#4a7eab" stroke-width="0.8"/><rect x="1829.5" y="234.5" width="3" height="3" fill="none" stroke="#4a7eab" stroke-width="0.8"/><path d="M1831 237.5 V244" stroke="#4a7eab" stroke-width="0.7"/><path d="M1852.5 229 H1863 A8 8 0 0 1 1871 237 V248 H1856 V244.5 H1852.5 Z" fill="#fff"/><path d="M1852.5 234.5 H1860" stroke="#333" stroke-width="0.8"/><rect x="1859.5" y="232.5" width="4.5" height="4.5" fill="#fff" stroke="#222" stroke-width="1.3"/><path d="M1862 237 V248" stroke="#222" stroke-width="0.9"/><path d="M1883 229 H1895 L1902 236 V248 H1887 V244.5 H1883 Z" fill="#fff"/><path d="M1883 236.5 H1890" stroke="#333" stroke-width="0.7"/><circle cx="1892" cy="237" r="2" fill="#fff" stroke="#333" stroke-width="0.7"/><path d="M1892 239 V248" stroke="#333" stroke-width="0.7"/></svg>
<div class="a" style="left:1586px;top:263px;width:319px;height:1px;background:#1e1e1e"></div>
<div class="a" style="left:1586px;top:369px;width:319px;height:1px;background:#1e1e1e"></div>
<div class="a" style="left:1586px;top:429px;width:319px;height:1px;background:#1e1e1e"></div>
<div class="a" style="left:1586px;top:632px;width:319px;height:1px;background:#1e1e1e"></div>
<span class="t" style="left:1625px;top:288px">Cap</span>
<div class="a" style="left:1656px;top:277px;width:115px;height:34px;background:#585858"></div>
<div class="a" style="left:1790px;top:277px;width:115px;height:34px;background:#585858"></div>
<div class="a" style="left:1773px;top:277px;width:15px;height:16px;background:#444"></div><div class="a" style="left:1773px;top:294px;width:15px;height:17px;background:#444"></div>
<svg style="left:1773px;top:277px" width="15" height="34" viewBox="0 0 15 34"><path d="M6 4.5 L9 7.5 L6 10.5 M9 21.5 L6 24.5 L9 27.5" fill="none" stroke="#ddd" stroke-width="1"/></svg>
<div class="a" style="left:1773px;top:323px;width:15px;height:16px;background:#444"></div><div class="a" style="left:1773px;top:340px;width:15px;height:17px;background:#444"></div>
<svg style="left:1773px;top:323px" width="15" height="34" viewBox="0 0 15 34"><path d="M6 4.5 L9 7.5 L6 10.5 M9 21.5 L6 24.5 L9 27.5" fill="none" stroke="#ddd" stroke-width="1"/></svg>
<svg style="left:1700px;top:284px" width="34" height="20" viewBox="0 0 34 20"><rect x="3" y="1.7" width="27.5" height="16.3" fill="#ddd"/><path d="M2 9.8 H30.5" stroke="#222" stroke-width="1"/><rect x="1" y="8.3" width="3" height="3" fill="#111"/></svg>
<svg style="left:1808px;top:284px" width="34" height="20" viewBox="0 0 34 20"><rect x="1" y="1.7" width="27.5" height="16.3" fill="#ddd"/><path d="M1 9.8 H30" stroke="#222" stroke-width="1"/><rect x="27.5" y="8.3" width="3" height="3" fill="#111"/></svg>
<svg style="left:1748px;top:290px" width="16" height="9" viewBox="0 0 16 9"><path d="M1 1 L8.0 8 L15 1" fill="none" stroke="#ddd" stroke-width="1.6"/></svg><svg style="left:1882px;top:290px" width="16" height="9" viewBox="0 0 16 9"><path d="M1 1 L8.0 8 L15 1" fill="none" stroke="#ddd" stroke-width="1.6"/></svg>
<span class="t" style="left:1612px;top:334px">Arrow</span>
<div class="a" style="left:1656px;top:323px;width:115px;height:34px;background:#585858"></div>
<div class="a" style="left:1790px;top:323px;width:115px;height:34px;background:#585858"></div>
<div class="a" style="left:1695px;top:338px;width:47px;height:4px;background:#ddd"></div>
<div class="a" style="left:1797.5px;top:338px;width:47px;height:4px;background:#ddd"></div>
<svg style="left:1748px;top:336px" width="16" height="9" viewBox="0 0 16 9"><path d="M1 1 L8.0 8 L15 1" fill="none" stroke="#ddd" stroke-width="1.6"/></svg><svg style="left:1882px;top:336px" width="16" height="9" viewBox="0 0 16 9"><path d="M1 1 L8.0 8 L15 1" fill="none" stroke="#ddd" stroke-width="1.6"/></svg>
<span class="t" style="left:1621px;top:394px">Paint</span>
<div class="a" style="left:1657px;top:382px;width:86px;height:34px;background:#585858"></div><svg style="left:1735px;top:408px" width="7" height="7" viewBox="0 0 7 7"><path d="M0 7 L7 0 V7 Z" fill="#ccc"/></svg>
<div class="a" style="left:1765px;top:391px;width:17px;height:17px;background:#666;border:1px solid #2a2a2a"></div>
<span class="t" style="left:1787px;top:394px;color:#8a8a8a">Gap</span>
<div class="a" style="left:1819px;top:382px;width:86px;height:34px;background:#585858"></div><svg style="left:1897px;top:408px" width="7" height="7" viewBox="0 0 7 7"><path d="M0 7 L7 0 V7 Z" fill="#ccc"/></svg>
<span class="t" style="left:1585px;top:446px">Dash</span>
<div class="a" style="left:1586px;top:465px;width:287px;height:28px;background:#585858"></div>
<div class="a" style="left:1605px;top:478px;width:226px;height:3px;background:#ddd"></div>
<svg style="left:1850px;top:475px" width="16" height="9" viewBox="0 0 16 9"><path d="M1 1 L8.0 8 L15 1" fill="none" stroke="#ddd" stroke-width="1.6"/></svg><div class="a" style="left:1878px;top:466px;width:27px;height:27px;background:#444"><svg width="27" height="27" viewBox="0 0 27 27"><path d="M5 7.5 H22 M5 13.5 H22 M5 19.5 H22" stroke="#ddd" stroke-width="1"/><circle cx="10" cy="7.5" r="2" fill="#444" stroke="#ddd" stroke-width="1"/><circle cx="17" cy="13.5" r="2" fill="#444" stroke="#ddd" stroke-width="1"/><circle cx="12" cy="19.5" r="2" fill="#444" stroke="#ddd" stroke-width="1"/></svg></div>
<span class="t" style="left:1585px;top:510px">Stripe</span>
<div class="a" style="left:1586px;top:528px;width:287px;height:29px;background:#585858"></div>
<div class="a" style="left:1605px;top:536px;width:226px;height:13px;background:#ddd"></div>
<svg style="left:1850px;top:538px" width="16" height="9" viewBox="0 0 16 9"><path d="M1 1 L8.0 8 L15 1" fill="none" stroke="#ddd" stroke-width="1.6"/></svg><div class="a" style="left:1878px;top:529px;width:27px;height:27px;background:#444"><svg width="27" height="27" viewBox="0 0 27 27"><path d="M5 7.5 H22 M5 13.5 H22 M5 19.5 H22" stroke="#ddd" stroke-width="1"/><circle cx="10" cy="7.5" r="2" fill="#444" stroke="#ddd" stroke-width="1"/><circle cx="17" cy="13.5" r="2" fill="#444" stroke="#ddd" stroke-width="1"/><circle cx="12" cy="19.5" r="2" fill="#444" stroke="#ddd" stroke-width="1"/></svg></div>
<span class="t" style="left:1585px;top:573px">Profile</span>
<div class="a" style="left:1586px;top:592px;width:287px;height:28px;background:#585858"></div>
<div class="a" style="left:1599px;top:597px;width:239px;height:18px;background:#ddd"></div>
<svg style="left:1850px;top:601px" width="16" height="9" viewBox="0 0 16 9"><path d="M1 1 L8.0 8 L15 1" fill="none" stroke="#ddd" stroke-width="1.6"/></svg><div class="a" style="left:1878px;top:592px;width:27px;height:27px;background:#444"><svg width="27" height="27" viewBox="0 0 27 27"><path d="M5 7.5 H22 M5 13.5 H22 M5 19.5 H22" stroke="#ddd" stroke-width="1"/><circle cx="10" cy="7.5" r="2" fill="#444" stroke="#ddd" stroke-width="1"/><circle cx="17" cy="13.5" r="2" fill="#444" stroke="#ddd" stroke-width="1"/><circle cx="12" cy="19.5" r="2" fill="#444" stroke="#ddd" stroke-width="1"/></svg></div>

<!-- stroke bottom icons -->
<svg style="left:1650px;top:640px" width="260" height="35" viewBox="1650 640 260 35"><path d="M1660 650.6 H1677.5 M1660 656.9 H1677.5 M1660 663.2 H1677.5" stroke="#ddd" stroke-width="1.1"/><circle cx="1665" cy="650.6" r="1.8" fill="#333" stroke="#ddd" stroke-width="1"/><circle cx="1673.5" cy="656.9" r="1.8" fill="#333" stroke="#ddd" stroke-width="1"/><circle cx="1667" cy="663.2" r="1.8" fill="#333" stroke="#ddd" stroke-width="1"/><circle cx="1700.8" cy="657" r="8.3" fill="none" stroke="#f2f2f2" stroke-width="2" stroke-dasharray="9 4" transform="rotate(20 1700.8 657)"/><circle cx="1700.8" cy="657" r="4.3" fill="none" stroke="#f2f2f2" stroke-width="1.8" stroke-dasharray="5 2.5"/><g transform="rotate(-45 1733 657)"><rect x="1720" y="653" width="13" height="8" rx="4" fill="none" stroke="#f2f2f2" stroke-width="1.6"/><rect x="1733" y="653" width="13" height="8" rx="4" fill="none" stroke="#f2f2f2" stroke-width="1.6"/></g><rect x="1756.5" y="649.5" width="17" height="15.5" fill="none" stroke="#999" stroke-width="1"/><path d="M1760.5 652 L1770 656 L1766 657.5 L1769 661.5 L1767.5 662.5 L1764.5 658.5 L1762 661.5 Z" fill="#f2f2f2"/><path d="M1788 655.5 C1791 652 1794 652 1797.5 655 C1801 658 1804 658.5 1807 655.5" fill="none" stroke="#f2f2f2" stroke-width="2.6"/><circle cx="1829.4" cy="657" r="9.7" fill="none" stroke="#f2f2f2" stroke-width="1.4"/><path d="M1823.5 657 H1835.3 M1829.4 651 V663" stroke="#f2f2f2" stroke-width="1.4"/><rect x="1853.3" y="650.3" width="17.2" height="13.2" fill="none" stroke="#f2f2f2" stroke-width="3"/><path d="M1885.5 650 H1902.5 M1891 650 V647.5 H1897 V650" fill="none" stroke="#f2f2f2" stroke-width="1.3"/><path d="M1887 651.5 L1888.5 666.5 H1899.5 L1901 651.5" fill="none" stroke="#f2f2f2" stroke-width="1.4"/><path d="M1891.5 653.5 V664 M1894 653.5 V664 M1896.5 653.5 V664" stroke="#f2f2f2" stroke-width="0.9"/></svg>
<div class="a" style="left:1900px;top:722px;width:11px;height:266px;background:#8a8a8a;border-radius:5.5px"></div>
<div class="a" style="left:1579px;top:995px;width:333px;height:1px;background:#1e1e1e"></div>
<div class="a" style="left:1579px;top:1002px;width:333px;height:23px;background:#232323;border-radius:5px"></div>
<svg style="left:1584px;top:1003px" width="22" height="21" viewBox="0 0 22 21"><circle cx="12.5" cy="8" r="5" fill="none" stroke="#f2f2f2" stroke-width="1.4"/><path d="M9 11.5 L3.5 17" stroke="#f2f2f2" stroke-width="2"/></svg>
<svg style="left:1886px;top:1003px" width="22" height="21" viewBox="0 0 22 21"><circle cx="9" cy="8.5" r="6" fill="none" stroke="#f2f2f2" stroke-width="1.5"/><path d="M6.8 6.3 L11.2 10.7 M11.2 6.3 L6.8 10.7" stroke="#f2f2f2" stroke-width="1.4"/><path d="M13.2 12.7 L17.5 17" stroke="#f2f2f2" stroke-width="2"/></svg>
<svg style="left:1595px;top:1040px" width="320" height="30" viewBox="1595 1040 320 30"><path d="M1601.5 1051 H1620.8 M1601.5 1058.7 H1620.8" stroke="#9a9a9a" stroke-width="1.6"/><circle cx="1607" cy="1051" r="3" fill="#333" stroke="#9a9a9a" stroke-width="1.5"/><circle cx="1615" cy="1058.7" r="3" fill="#333" stroke="#9a9a9a" stroke-width="1.5"/><rect x="1639" y="1045.5" width="13.5" height="13.5" fill="none" stroke="#9a9a9a" stroke-width="1.5"/><rect x="1634.3" y="1050.5" width="13.5" height="13.5" fill="#333" stroke="#9a9a9a" stroke-width="1.5"/><circle cx="1675.5" cy="1055" r="9.6" fill="#9a9a9a"/><rect x="1670.5" y="1049.5" width="6" height="6" fill="none" stroke="#333" stroke-width="1.4"/><rect x="1674.5" y="1053.5" width="6" height="6" fill="none" stroke="#333" stroke-width="1.4"/><rect x="1699" y="1046.5" width="17.5" height="17.5" fill="none" stroke="#9a9a9a" stroke-width="1.3"/><rect x="1705" y="1050" width="8" height="8" fill="none" stroke="#9a9a9a" stroke-width="1.2"/><rect x="1702.5" y="1052.5" width="8" height="8" fill="none" stroke="#9a9a9a" stroke-width="1.2"/><path d="M1698 1045.5 h2 M1715.5 1045.5 h2 M1698 1064.5 h2 M1715.5 1064.5 h2" stroke="#9a9a9a" stroke-width="2"/><rect x="1736" y="1046.5" width="12.5" height="12.5" fill="none" stroke="#9a9a9a" stroke-width="1.3"/><rect x="1731.5" y="1051" width="12.5" height="12.5" fill="none" stroke="#9a9a9a" stroke-width="1.3"/><path d="M1731.5 1047 V1051 M1749 1059 V1064 M1731 1064 H1736 M1744 1046.5 H1749" stroke="#9a9a9a" stroke-width="1.3"/><rect x="1762.5" y="1045.5" width="19" height="19" rx="1.2" fill="none" stroke="#f2f2f2" stroke-width="1.1"/><text x="1765" y="1060.5" font-family="Liberation Serif" font-style="italic" font-size="14" fill="#f2f2f2">fx</text><path d="M1795 1051 A2 2 0 0 1 1797 1049 H1800 L1801.5 1046.5 H1808 L1809.5 1049 H1812.5 A2 2 0 0 1 1814.5 1051 V1061.5 A2 2 0 0 1 1812.5 1063.5 H1797 A2 2 0 0 1 1795 1061.5 Z" fill="#f2f2f2"/><circle cx="1804.7" cy="1055.5" r="4" fill="#333"/><circle cx="1804.7" cy="1055.5" r="2" fill="#f2f2f2"/><rect x="1832" y="1045" width="15" height="15" rx="1.5" fill="#f2f2f2"/><rect x="1826" y="1050.5" width="16" height="15" rx="1.5" fill="#f2f2f2" stroke="#333" stroke-width="1"/><path d="M1830 1058 H1838 M1834 1054 V1062" stroke="#333" stroke-width="1.3"/><rect x="1858.3" y="1045" width="20.7" height="20" rx="3.5" fill="#9a9a9a"/><path d="M1862 1056 L1868.5 1052 L1875 1056 L1868.5 1060 Z" fill="#333"/><path d="M1862 1058.5 L1868.5 1062.5 L1875 1058.5" fill="none" stroke="#333" stroke-width="1"/><path d="M1871 1048 V1053 M1869 1051 L1871 1053 L1873 1051" fill="none" stroke="#333" stroke-width="1"/><path d="M1892 1048 H1910 M1898 1048 V1045.5 H1904 V1048" fill="none" stroke="#9a9a9a" stroke-width="1.3"/><path d="M1893.5 1049.5 L1895 1064.5 H1907 L1908.5 1049.5" fill="none" stroke="#9a9a9a" stroke-width="1.5"/><path d="M1898 1051.5 V1062 M1901 1051.5 V1062 M1904 1051.5 V1062" stroke="#9a9a9a" stroke-width="1"/></svg>

<!-- right panel container -->


</body></html>
